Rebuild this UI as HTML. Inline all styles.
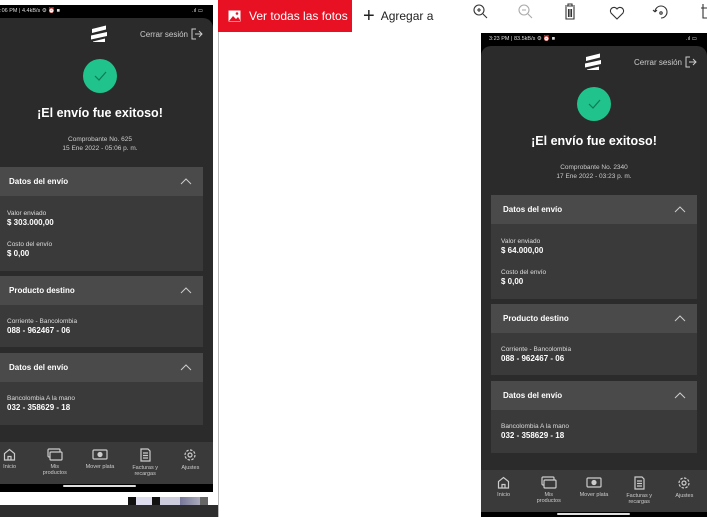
<!DOCTYPE html>
<html><head><meta charset="utf-8"><style>
*{margin:0;padding:0;box-sizing:border-box}
body{width:707px;height:517px;overflow:hidden;background:#fff;position:relative;font-family:"Liberation Sans",sans-serif}
.ph{position:absolute;width:226px;height:484px;background:#000;overflow:hidden}
.sb{position:absolute;left:8px;top:3px;font-size:5.5px;color:#ddd}
.sbr{position:absolute;right:10px;top:3px;font-size:5.5px;color:#ddd}
.card{position:absolute;left:0;top:13px;width:226px;height:466px;background:#2b2b2b;border-radius:10px 10px 0 0}
.logo{position:absolute;left:102px;top:7px}
.cs{position:absolute;right:10px;top:10px;font-size:8px;color:#ccc;display:flex;align-items:center;gap:3px}
.chk{position:absolute;left:96px;top:41px;width:34px;height:34px;border-radius:50%;background:#1fc38b}
.tt{position:absolute;left:0;width:226px;top:88px;text-align:center;color:#fff;font-weight:bold;font-size:12.5px}
.cp{position:absolute;left:0;width:226px;top:117px;text-align:center;color:#ccc;font-size:6.5px;line-height:9px}
.sh{position:absolute;left:10px;width:206px;height:29px;background:#4a4a4a;color:#fff;font-size:8px;font-weight:bold;padding:10px 0 0 12px}
.sh svg{position:absolute;right:11px;top:11px}
.sbd{position:absolute;left:10px;width:206px;background:#3a3a3a;color:#ddd;font-size:6.5px;padding-left:10px}
.sbd b{display:block;color:#fff;font-size:8px;margin-top:1px}
.nav{position:absolute;left:0;top:437px;width:226px;height:42px;background:#3a3a3a;display:flex;justify-content:space-around;padding-top:6px}
.nav>div{color:#ccc;font-size:5.5px;text-align:center;width:40px;line-height:6px}
.nav svg{display:block;margin:0 auto 3px}
.ind{position:absolute;left:76px;top:480px;width:73px;height:2px;background:#ddd;border-radius:1px}
.tb{position:absolute;top:0;height:32px;font-size:12px;color:#222;display:flex;align-items:center}
</style></head><body>

<div class="tb" style="left:218px;width:134px;background:#e81123;color:#fff;padding-left:10px">
<svg width="13" height="12" viewBox="0 0 13 12"><rect x="0.5" y="0.5" width="12" height="11" fill="#fff"/><path d="M1 11 L5 6 L8 9 L10 7 L12 10 V11Z" fill="#e81123"/><circle cx="9" cy="3.5" r="1.3" fill="#e81123"/></svg>
<span style="margin-left:8px">Ver todas las fotos</span></div>
<div class="tb" style="left:363px"><span style="font-size:20px;font-weight:300;margin-right:6px">+</span>Agregar a</div>
<svg style="position:absolute;left:471px;top:2px" width="240" height="22" viewBox="0 0 240 22" fill="none" stroke="#333" stroke-width="1.1">
<circle cx="8" cy="8" r="5"/><path d="M12 12l4 4M6 8h4M8 6v4"/>
<g stroke="#aaa"><circle cx="53" cy="8" r="5"/><path d="M57 12l4 4M51 8h4"/></g>
<path d="M94 4h10M97 4V2h4v2M95 5v12h8V5M97.5 7v8M99 7v8M100.5 7v8"/>
<path d="M146 17l-6-6a3.5 3.5 0 0 1 6-4a3.5 3.5 0 0 1 6 4z"/>
<path d="M184 10a6 6 0 1 1 6 6M184 10l-2-2M184 10l2-2"/><circle cx="190" cy="11" r="1.2"/>
<path d="M232 2v14h6M230 6h6"/></svg>
<div style="position:absolute;left:218px;top:32px;width:1px;height:485px;background:#bbb"></div>

<!-- left phone -->
<div class="ph" style="left:-13px;top:5px;height:487px">
<div class="sb" style="left:10px">5:06 PM | 4.4kB/s ⚙ ⏰ ■</div><div class="sbr">.ıl ▭</div>
<div class="card">
<svg class="logo" width="20" height="18" viewBox="0 0 20 18"><path d="M3 4l14-3.5v4L3 8z M2 10.5l16-3.5v4L2 14.5z M4 16.5l12-3v3.5H4z" fill="#fff"/></svg>
<div class="cs">Cerrar sesión <svg width="12" height="12" viewBox="0 0 12 12" fill="none" stroke="#ccc"><path d="M5 1H1v10h4M4 6h7M8 3l3 3-3 3"/></svg></div>
<div class="chk"><svg width="34" height="34"><path d="M12 17l4 4 7-8" stroke="#0f7a55" stroke-width="1.2" fill="none"/></svg></div>
<div class="tt">¡El envío fue exitoso!</div>
<div class="cp">Comprobante No. 625<br>15 Ene 2022 - 05:06 p. m.</div>
<div class="sh" style="top:149px">Datos del envío<svg width="12" height="7"><path d="M1 6l5-5 5 5" stroke="#ccc" fill="none"/></svg></div>
<div class="sbd" style="top:178px;height:75px;padding-top:14px">Valor enviado<b>$ 303.000,00</b><div style="height:14px"></div>Costo del envío<b>$ 0,00</b></div>
<div class="sh" style="top:258px">Producto destino<svg width="12" height="7"><path d="M1 6l5-5 5 5" stroke="#ccc" fill="none"/></svg></div>
<div class="sbd" style="top:287px;height:42px;padding-top:13px">Corriente - Bancolombia<b>088 - 962467 - 06</b></div>
<div class="sh" style="top:335px">Datos del envío<svg width="12" height="7"><path d="M1 6l5-5 5 5" stroke="#ccc" fill="none"/></svg></div>
<div class="sbd" style="top:364px;height:43px;padding-top:13px">Bancolombia A la mano<b>032 - 358629 - 18</b></div>
</div>
<div class="nav">
<div><svg width="13" height="13" viewBox="0 0 13 13" fill="none" stroke="#ccc" stroke-width="1.2"><path d="M1.5 12V5.5L6.5 1.5l5 4V12z M5 12V8.5h3V12"/></svg>Inicio</div>
<div><svg width="16" height="13" viewBox="0 0 16 13" fill="none" stroke="#ccc" stroke-width="1.2"><rect x="1" y="1" width="12" height="8" rx="1"/><rect x="3" y="4" width="12" height="8" rx="1" fill="#3a3a3a"/></svg>Mis<br>productos</div>
<div><svg width="16" height="13" viewBox="0 0 16 13" fill="none" stroke="#ccc" stroke-width="1.2"><rect x="1" y="2" width="14" height="9" rx="1"/><circle cx="8" cy="6.5" r="2" fill="#ccc"/></svg>Mover plata</div>
<div><svg width="11" height="14" viewBox="0 0 11 14" fill="none" stroke="#ccc" stroke-width="1.2"><path d="M1 1h7l2 2v10H1z M3 5h5M3 7.5h5M3 10h5"/></svg>Facturas y<br>recargas</div>
<div><svg width="14" height="14" viewBox="0 0 14 14" fill="none" stroke="#ccc" stroke-width="1.2"><circle cx="7" cy="7" r="2"/><circle cx="7" cy="7" r="5" stroke-dasharray="2.5 1.4"/></svg>Ajustes</div>
</div>
<div class="ind"></div>
</div>
<div style="position:absolute;left:128px;top:497px;width:80px;height:8px;background:linear-gradient(90deg,#111 10%,#dde 10%,#dde 30%,#111 30%,#111 40%,#ccd 40%,#ccd 65%,#779 65%,#aab 90%,#666 90%)"></div>
<div style="position:absolute;left:0;top:505px;width:218px;height:12px;background:#2d2d2d"></div>

<!-- right phone -->
<div class="ph" style="left:481px;top:33px">
<div class="sb">3:23 PM | 83.5kB/s ⚙ ⏰ ■</div><div class="sbr">.ıl ▭</div>
<div class="card">
<svg class="logo" width="20" height="18" viewBox="0 0 20 18"><path d="M3 4l14-3.5v4L3 8z M2 10.5l16-3.5v4L2 14.5z M4 16.5l12-3v3.5H4z" fill="#fff"/></svg>
<div class="cs">Cerrar sesión <svg width="12" height="12" viewBox="0 0 12 12" fill="none" stroke="#ccc"><path d="M5 1H1v10h4M4 6h7M8 3l3 3-3 3"/></svg></div>
<div class="chk"><svg width="34" height="34"><path d="M12 17l4 4 7-8" stroke="#0f7a55" stroke-width="1.2" fill="none"/></svg></div>
<div class="tt">¡El envío fue exitoso!</div>
<div class="cp">Comprobante No. 2340<br>17 Ene 2022 - 03:23 p. m.</div>
<div class="sh" style="top:149px">Datos del envío<svg width="12" height="7"><path d="M1 6l5-5 5 5" stroke="#ccc" fill="none"/></svg></div>
<div class="sbd" style="top:178px;height:75px;padding-top:14px">Valor enviado<b>$ 64.000,00</b><div style="height:14px"></div>Costo del envío<b>$ 0,00</b></div>
<div class="sh" style="top:258px">Producto destino<svg width="12" height="7"><path d="M1 6l5-5 5 5" stroke="#ccc" fill="none"/></svg></div>
<div class="sbd" style="top:287px;height:42px;padding-top:13px">Corriente - Bancolombia<b>088 - 962467 - 06</b></div>
<div class="sh" style="top:335px">Datos del envío<svg width="12" height="7"><path d="M1 6l5-5 5 5" stroke="#ccc" fill="none"/></svg></div>
<div class="sbd" style="top:364px;height:43px;padding-top:13px">Bancolombia A la mano<b>032 - 358629 - 18</b></div>
</div>
<div class="nav">
<div><svg width="13" height="13" viewBox="0 0 13 13" fill="none" stroke="#ccc" stroke-width="1.2"><path d="M1.5 12V5.5L6.5 1.5l5 4V12z M5 12V8.5h3V12"/></svg>Inicio</div>
<div><svg width="16" height="13" viewBox="0 0 16 13" fill="none" stroke="#ccc" stroke-width="1.2"><rect x="1" y="1" width="12" height="8" rx="1"/><rect x="3" y="4" width="12" height="8" rx="1" fill="#3a3a3a"/></svg>Mis<br>productos</div>
<div><svg width="16" height="13" viewBox="0 0 16 13" fill="none" stroke="#ccc" stroke-width="1.2"><rect x="1" y="2" width="14" height="9" rx="1"/><circle cx="8" cy="6.5" r="2" fill="#ccc"/></svg>Mover plata</div>
<div><svg width="11" height="14" viewBox="0 0 11 14" fill="none" stroke="#ccc" stroke-width="1.2"><path d="M1 1h7l2 2v10H1z M3 5h5M3 7.5h5M3 10h5"/></svg>Facturas y<br>recargas</div>
<div><svg width="14" height="14" viewBox="0 0 14 14" fill="none" stroke="#ccc" stroke-width="1.2"><circle cx="7" cy="7" r="2"/><circle cx="7" cy="7" r="5" stroke-dasharray="2.5 1.4"/></svg>Ajustes</div>
</div>
<div class="ind"></div>
</div>
</body></html>
